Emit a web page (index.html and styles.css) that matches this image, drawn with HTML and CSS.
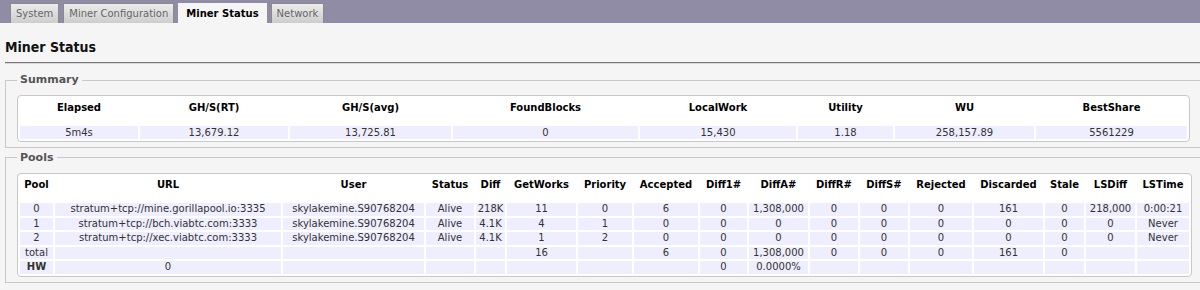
FILE: index.html
```html
<!DOCTYPE html>
<html>
<head>
<meta charset="utf-8">
<title>Miner Status</title>
<link rel="stylesheet" href="styles.css">
</head>
<body>
<div class="tabbar">
  <a class="tab">System</a>
  <a class="tab">Miner Configuration</a>
  <a class="tab active">Miner Status</a>
  <a class="tab">Network</a>
</div>
<div class="page">
  <h2 class="title">Miner Status</h2>
  <hr class="rule">
  <fieldset class="section">
    <legend class="legend">Summary</legend>
    <table class="grid">
      <colgroup>
        <col class="s-elapsed"><col class="s-rt"><col class="s-avg"><col class="s-found">
        <col class="s-local"><col class="s-util"><col class="s-wu"><col class="s-best">
      </colgroup>
      <tr class="head">
        <th>Elapsed</th><th>GH/S(RT)</th><th>GH/S(avg)</th><th>FoundBlocks</th>
        <th>LocalWork</th><th>Utility</th><th>WU</th><th>BestShare</th>
      </tr>
      <tr class="row">
        <td>5m4s</td><td>13,679.12</td><td>13,725.81</td><td>0</td>
        <td>15,430</td><td>1.18</td><td>258,157.89</td><td>5561229</td>
      </tr>
    </table>
  </fieldset>
  <fieldset class="section pools">
    <legend class="legend">Pools</legend>
    <table class="grid">
      <colgroup>
        <col class="p-pool"><col class="p-url"><col class="p-user"><col class="p-status">
        <col class="p-diff"><col class="p-gw"><col class="p-prio"><col class="p-acc">
        <col class="p-d1"><col class="p-da"><col class="p-dr"><col class="p-ds">
        <col class="p-rej"><col class="p-disc"><col class="p-stale"><col class="p-lsd">
        <col class="p-lst">
      </colgroup>
      <tr class="head">
        <th>Pool</th><th>URL</th><th>User</th><th>Status</th><th>Diff</th><th>GetWorks</th>
        <th>Priority</th><th>Accepted</th><th>Diff1#</th><th>DiffA#</th><th>DiffR#</th>
        <th>DiffS#</th><th>Rejected</th><th>Discarded</th><th>Stale</th><th>LSDiff</th><th>LSTime</th>
      </tr>
      <tr class="row">
        <td>0</td><td>stratum+tcp://mine.gorillapool.io:3335</td><td>skylakemine.S90768204</td>
        <td>Alive</td><td>218K</td><td>11</td><td>0</td><td>6</td><td>0</td><td>1,308,000</td>
        <td>0</td><td>0</td><td>0</td><td>161</td><td>0</td><td>218,000</td><td>0:00:21</td>
      </tr>
      <tr class="row">
        <td>1</td><td>stratum+tcp://bch.viabtc.com:3333</td><td>skylakemine.S90768204</td>
        <td>Alive</td><td>4.1K</td><td>4</td><td>1</td><td>0</td><td>0</td><td>0</td>
        <td>0</td><td>0</td><td>0</td><td>0</td><td>0</td><td>0</td><td>Never</td>
      </tr>
      <tr class="row">
        <td>2</td><td>stratum+tcp://xec.viabtc.com:3333</td><td>skylakemine.S90768204</td>
        <td>Alive</td><td>4.1K</td><td>1</td><td>2</td><td>0</td><td>0</td><td>0</td>
        <td>0</td><td>0</td><td>0</td><td>0</td><td>0</td><td>0</td><td>Never</td>
      </tr>
      <tr class="row">
        <td>total</td><td></td><td></td><td></td><td></td><td>16</td><td></td><td>6</td>
        <td>0</td><td>1,308,000</td><td>0</td><td>0</td><td>0</td><td>161</td><td>0</td><td></td><td></td>
      </tr>
      <tr class="row">
        <td class="hw">HW</td><td>0</td><td></td><td></td><td></td><td></td><td></td><td></td>
        <td>0</td><td>0.0000%</td><td></td><td></td><td></td><td></td><td></td><td></td><td></td>
      </tr>
    </table>
  </fieldset>
</div>
</body>
</html>
```
FILE: styles.css
```css
html {
  overflow: hidden;
}
body {
  margin: 0;
  background: #f5f5f5;
  font-family: "DejaVu Sans", Verdana, sans-serif;
  font-size: 10px;
  color: #333;
}
.tabbar {
  background: #918ca6;
  height: 23px;
  padding-left: 10px;
  display: flex;
  align-items: flex-end;
  gap: 4px;
  box-sizing: border-box;
}
.tab {
  height: 20px;
  line-height: 20px;
  padding: 0 5px;
  border: 1px solid #8a8a8a;
  border-bottom: none;
  box-sizing: border-box;
  background: linear-gradient(#ececec, #cdcdcd);
  color: #666;
  white-space: nowrap;
}
.tab.active {
  background: #f5f5f5;
  border-color: #f5f5f5;
  color: #000;
  font-weight: bold;
  padding: 0 7px;
}
.page {
  padding-left: 5px;
}
.title {
  margin: 0;
  padding-top: 14px;
  font-family: "DejaVu Sans Condensed", "DejaVu Sans", sans-serif;
  font-weight: bold;
  font-size: 14px;
  line-height: 20px;
  color: #111;
}
.rule {
  margin: 5px 0 0 0;
  height: 0;
  border: 0;
  border-top: 1px solid #777;
  border-bottom: 1px solid #d8d8d8;
}
.section {
  margin: 9px -2px 0 0;
  border: 1px solid #c8c8c8;
  padding: 8px 11px 5px;
}
.section.pools {
  margin-top: 3px;
  padding-bottom: 5px;
}
.legend {
  padding: 0 3px;
  font-size: 11px;
  line-height: 14px;
  font-weight: bold;
  color: #555;
}
.grid {
  width: 100%;
  table-layout: fixed;
  border-collapse: separate;
  border-spacing: 2px;
  background: #fff;
  border: 1px solid #c8c8c8;
  border-radius: 4px;
}
.grid th {
  padding: 2.5px 0 10px;
  line-height: 13px;
  font-weight: bold;
  color: #000;
  text-align: center;
  white-space: nowrap;
}
.grid td {
  padding: 0;
  line-height: 13px;
  background: #eeeefe;
  text-align: center;
  white-space: nowrap;
}
.pools .grid td {
  line-height: 12.6px;
}
.grid td.hw {
  font-weight: bold;
}
.s-elapsed { width: 118px; }
.s-rt { width: 148px; }
.s-avg { width: 161px; }
.s-found { width: 185px; }
.s-local { width: 156px; }
.s-util { width: 95px; }
.s-wu { width: 139px; }
.s-best { width: 151px; }
.p-pool { width: 33px; }
.p-url { width: 226px; }
.p-user { width: 141px; }
.p-status { width: 48px; }
.p-diff { width: 29px; }
.p-gw { width: 69px; }
.p-prio { width: 54px; }
.p-acc { width: 64px; }
.p-d1 { width: 47px; }
.p-da { width: 59px; }
.p-dr { width: 48px; }
.p-ds { width: 48px; }
.p-rej { width: 62px; }
.p-disc { width: 69px; }
.p-stale { width: 39px; }
.p-lsd { width: 49px; }
.p-lst { width: 52px; }
```
